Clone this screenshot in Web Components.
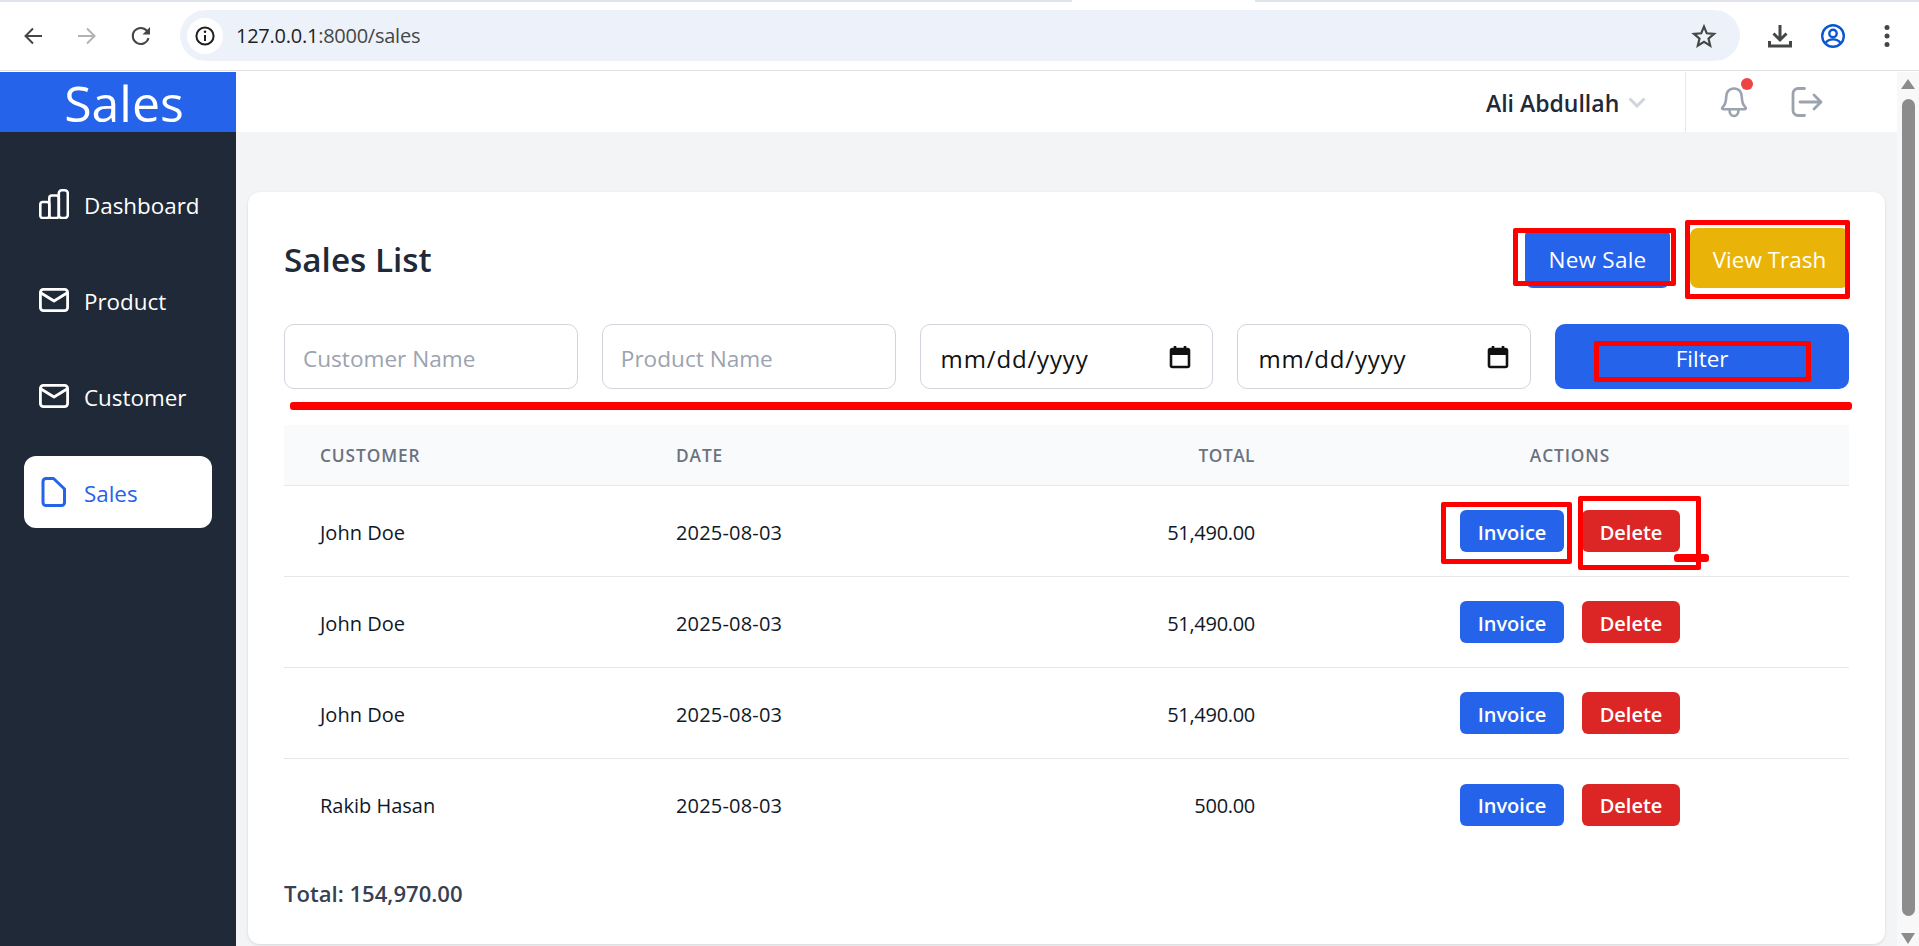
<!DOCTYPE html>
<html lang="en">
<head>
<meta charset="UTF-8">
<title>Sales</title>
<style>
    html, body { margin: 0; height: 946px; overflow: hidden; background: #f3f4f6; }
    body { font-family: "Open Sans", "Noto Sans", sans-serif; position: relative; }
    .shell { display: flex; height: 874px; }
    .main { flex: 1; min-width: 0; display: flex; flex-direction: column; }
    .content { flex: 1; padding: 60px 12px 0; min-height: 0; }
</style>
</head>
<body>
<script>
    function define(name, html) {
        customElements.define(name, class extends HTMLElement {
            connectedCallback() {
                if (this.shadowRoot) return;
                this.attachShadow({mode: 'open'});
                this.shadowRoot.innerHTML = typeof html === 'function' ? html(this) : html;
            }
        });
    }

    define('browser-bar', `
        <style>
            :host { display: block; height: 72px; background: #fff; box-sizing: border-box; font-family: "Open Sans", sans-serif; position: relative; }
            .strip { display: flex; height: 1.5px; background: #dfe4ec; }
            .tab { margin-left: 1072px; width: 183px; background: #fff; }
            .bar { height: 69.5px; box-sizing: border-box; background: #fff; border-radius: 10px 10px 0 0; border-bottom: 1px solid #dfe1e5; display: flex; align-items: center; position: relative; }
            svg { display: block; flex: none; }
            .nav { display: flex; align-items: center; margin-left: 21px; gap: 30px; }
            .omni { position: absolute; left: 180px; width: 1560px; top: 8.5px; height: 51px; border-radius: 26px; background: #edf2fa; display: flex; align-items: center; padding-left: 7px; box-sizing: border-box; }
            .info { width: 36px; height: 36px; border-radius: 50%; background: #fff; display: flex; align-items: center; justify-content: center; }
            .url { margin-left: 13px; font-size: 20px; color: #1f1f1f; letter-spacing: -.25px; }
            .url span { color: #444746; }
            .star { margin-left: auto; margin-right: 23px; }
            .tools { position: absolute; left: 1766px; top: 0; bottom: 0; display: flex; align-items: center; gap: 26px; }
        </style>
        <div class="strip"><div class="tab"></div></div>
        <div class="bar">
            <div class="nav">
                <svg width="24" height="24" viewBox="0 0 24 24" fill="none" stroke="#444746" stroke-width="2"><path d="M21 12H5M12 4.5 4.5 12l7.5 7.5"/></svg>
                <svg width="24" height="24" viewBox="0 0 24 24" fill="none" stroke="#b1b3b3" stroke-width="2"><path d="M3 12h16M12 4.5l7.5 7.5-7.5 7.5"/></svg>
                <svg width="24" height="24" viewBox="0 0 24 24" fill="none" stroke="#444746" stroke-width="2"><path d="M19.5 14a8 8 0 1 1-1.6-7.2L20 9"/><path fill="#444746" stroke="none" d="M21 3v7.5h-7.5z"/></svg>
            </div>
            <div class="omni">
                <div class="info"><svg width="22" height="22" viewBox="0 0 22 22" fill="none" stroke="#1f1f1f" stroke-width="2"><circle cx="11" cy="11" r="8.6"/><path d="M11 10v6"/><circle cx="11" cy="6.8" r=".6" stroke-width="1.4"/></svg></div>
                <div class="url">127.0.0.1<span>:8000/sales</span></div>
                <svg class="star" width="26" height="26" viewBox="0 0 26 26" fill="none" stroke="#444746" stroke-width="2.2"><path d="M13 3.6l2.8 6.7 7.2.6-5.5 4.7 1.7 7-6.2-3.7-6.2 3.7 1.7-7L3 10.9l7.2-.6z"/></svg>
            </div>
            <div class="tools">
                <svg width="28" height="28" viewBox="0 0 28 28" fill="none" stroke="#444746" stroke-width="3"><path d="M14 3v15M7.5 11.5 14 18l6.5-6.5M3.5 19v5h21v-5"/></svg>
                <svg width="26" height="26" viewBox="0 0 26 26" fill="none" stroke="#0b57d0" stroke-width="2.4"><circle cx="13" cy="13" r="10.8"/><circle cx="13" cy="10.5" r="3.7"/><path d="M5.5 20c2-2.8 4.8-3.6 7.5-3.6s5.5.8 7.5 3.6"/></svg>
                <svg width="6" height="26" viewBox="0 0 6 26" fill="#444746" style="margin-left:12px"><circle cx="3" cy="4.5" r="2.5"/><circle cx="3" cy="13" r="2.5"/><circle cx="3" cy="21.5" r="2.5"/></svg>
            </div>
        </div>`);

    define('side-nav', `
        <style>
            :host { display: flex; flex-direction: column; width: 236px; flex: none; background: #1f2937; }
            .logo { height: 60px; box-sizing: border-box; padding: 2px 0 0 12px; background: #2563eb; color: #fff; font-size: 50px; line-height: 58px; text-align: center; }
            nav { display: flex; flex-direction: column; gap: 24px; padding: 36px 24px; }
        </style>
        <div class="logo">Sales</div>
        <nav><slot></slot></nav>`);

    define('nav-item', `
        <style>
            :host { display: flex; align-items: center; height: 72px; border-radius: 12px; padding-left: 15px; color: #fff; font-size: 22.4px; gap: 15px; }
            :host([active]) { background: #fff; color: #2563eb; }
            ::slotted(svg) { flex: none; display: block; }
            .t { padding-top: 2px; }
        </style>
        <slot name="icon"></slot><span class="t"><slot></slot></span>`);

    define('top-bar', `
        <style>
            :host { display: flex; align-items: center; height: 60px; background: #fff; flex: none; position: relative; }
            .user { position: absolute; left: 1250px; top: 0; bottom: 0; display: flex; align-items: center; gap: 9px; font-size: 23px; font-weight: 600; color: #1f2937; }
            .user span { padding-top: 1px; }
            .right { position: absolute; left: 1449px; top: 0; bottom: 0; border-left: 1px solid #e5e7eb; width: 212px; }
            svg { display: block; position: absolute; }
            .dot { position: absolute; left: 55px; top: 6px; width: 12px; height: 12px; border-radius: 50%; background: #ef4444; }
        </style>
        <div class="user"><span>Ali Abdullah</span>
            <svg style="position:static" width="18" height="11" viewBox="0 0 18 11" fill="none" stroke="#d1d5db" stroke-width="3"><path d="M1.5 1.5 9 9l7.5-7.5"/></svg>
        </div>
        <div class="right">
            <svg style="left:34px;top:14px" width="28" height="32" viewBox="0 0 28 32" fill="none" stroke="#9ca3af" stroke-width="2.6" stroke-linecap="round" stroke-linejoin="round"><path d="M14 2.5c-5 0-7.8 3.7-7.8 8.5 0 5.5-1.2 8-3.9 10.7-.5.7 0 1.5.8 1.5h21.800c.8 0 1.300-.8.8-1.500-2.700-2.700-3.900-5.200-3.900-10.700 0-4.800-2.800-8.500-7.800-8.500z"/><path d="M9.5 24c0 3.8 2 6 4.500 6s4.500-2.200 4.500-6"/></svg>
            <div class="dot"></div>
            <svg style="left:105px;top:15px" width="32" height="30" viewBox="0 0 32 30" fill="none" stroke="#9ca3af" stroke-width="2.8" stroke-linecap="round" stroke-linejoin="round"><path d="M13.5 1.5H7a5 5 0 0 0-5 5v17a5 5 0 0 0 5 5h6.5"/><path d="M9 15h21M23 8l7 7-7 7"/></svg>
        </div>`);

    define('app-btn', `
        <style>
            :host { display: flex; align-items: center; justify-content: center; box-sizing: border-box; height: 42px; padding-top: 2px; border-radius: 6px; color: #fff; font-size: 20px; font-weight: 600; }
            :host([kind="blue"]) { background: #2563eb; }
            :host([kind="red"]) { background: #dc2626; }
            :host([kind="yellow"]) { background: #eab308; }
            :host([big]) { height: 60px; padding-top: 3px; border-radius: 8px; font-size: 22.5px; font-weight: 400; }
            :host([wide]) { height: 65px; padding-top: 3px; border-radius: 10px; font-size: 22.5px; font-weight: 400; }
        </style>
        <slot></slot>`);

    define('field-box', host => `
        <style>
            :host { display: flex; align-items: center; box-sizing: border-box; height: 65px; border: 1px solid #d1d5db; border-radius: 10px; padding: 0 18px; font-size: 22.6px; color: #9ca3af; background: #fff; }
            :host([date]) { color: #111; padding: 0 21px 0 20px; justify-content: space-between; font-size: 24px; letter-spacing: .85px; }
            .t { padding-top: 3px; }
            svg { display: block; }
        </style>
        <span class="t"><slot></slot></span>
        ${host.hasAttribute('date') ? `<svg width="22" height="24" viewBox="0 0 22 24" fill="none" stroke="#111" stroke-width="2.6"><rect x="2" y="4" width="18" height="18" rx="1.5"/><path d="M2 7.5h18" stroke-width="5"/><path d="M6 1v3M16 1v3"/></svg>` : ''}`);

    define('table-head', `
        <style>
            :host { display: grid; grid-template-columns: 356px 295px 356px 558px; height: 61px; box-sizing: border-box; background: #f9fafb; border-bottom: 1px solid #e5e7eb; align-items: center; font-size: 17.3px; font-weight: 600; letter-spacing: .9px; color: #6b7280; }
            div { padding-left: 36px; }
            .total { text-align: right; padding: 0 36px 0 0; letter-spacing: .5px; }
            .act { text-align: center; padding: 0; }
        </style>
        <div>CUSTOMER</div><div>DATE</div><div class="total">TOTAL</div><div class="act">ACTIONS</div>`);

    define('sales-row', host => `
        <style>
            :host { display: grid; grid-template-columns: 356px 295px 356px 558px; height: 91px; box-sizing: border-box; border-bottom: 1px solid #e5e7eb; align-items: center; font-size: 20px; color: #111827; }
            :host(:last-of-type) { border-bottom: 0; }
            div.c { padding: 2px 0 0 36px; }
            .date { letter-spacing: .18px; }
            .total { text-align: right; padding: 2px 36px 0 0; letter-spacing: -.3px; }
            .act { display: flex; justify-content: center; gap: 18px; }
            .act app-btn:first-child { width: 104px; }
            .act app-btn:last-child { width: 98px; }
        </style>
        <div class="c">${host.getAttribute('customer')}</div>
        <div class="c date">${host.getAttribute('date')}</div>
        <div class="total">${host.getAttribute('total')}</div>
        <div class="act"><app-btn kind="blue">Invoice</app-btn><app-btn kind="red">Delete</app-btn></div>`);

    define('sales-card', `
        <style>
            :host { display: block; box-sizing: border-box; height: 752px; background: #fff; border-radius: 12px; padding: 36px 36px 0; box-shadow: 0 1px 3px rgba(0,0,0,.12); }
            .head { display: flex; align-items: center; height: 60px; gap: 20px; }
            h2 { margin: 0 auto 0 0; padding-top: 1px; font-size: 33.3px; font-weight: 600; color: #1f2937; }
            .head app-btn:nth-of-type(1) { width: 145px; letter-spacing: .25px; }
            .head app-btn:nth-of-type(2) { width: 159px; }
            .filters { display: grid; grid-template-columns: repeat(5, 1fr); gap: 24px; margin: 36px 0; }
            .total { margin-top: 23px; height: 40px; line-height: 40px; font-size: 22.1px; font-weight: 600; color: #374151; }
        </style>
        <div class="head"><h2>Sales List</h2><app-btn kind="blue" big>New Sale</app-btn><app-btn kind="yellow" big>View Trash</app-btn></div>
        <div class="filters">
            <field-box>Customer Name</field-box>
            <field-box>Product Name</field-box>
            <field-box date>mm/dd/yyyy</field-box>
            <field-box date>mm/dd/yyyy</field-box>
            <app-btn kind="blue" wide>Filter</app-btn>
        </div>
        <slot></slot>
        <div class="total">Total: 154,970.00</div>`);

    define('scroll-rail', `
        <style>
            :host { display: flex; flex-direction: column; align-items: center; width: 22px; flex: none; background: #f8f8f8; box-sizing: border-box; height: 874px; }
            .up { width: 0; height: 0; border: 7.5px solid transparent; border-top: 0; border-bottom: 10px solid #8c8c8c; margin-top: 7px; }
            .thumb { width: 13px; height: 817px; background: #8c8c8c; border-radius: 7px; margin-top: 10px; }
            .down { width: 0; height: 0; border: 7.5px solid transparent; border-bottom: 0; border-top: 11px solid #8c8c8c; margin-top: 17px; }
        </style>
        <div class="up"></div><div class="thumb"></div><div class="down"></div>`);

    // red marker scribbles someone drew on top of the screenshot
    define('ink-marks', `
        <style>
            :host { display: block; position: absolute; inset: 0; pointer-events: none; }
            i { position: absolute; box-sizing: border-box; border: 5px solid #f00; border-radius: 2px; }
            b { position: absolute; background: #f00; border-radius: 3px; }
        </style>
        <i style="left:1513px;top:228px;width:163px;height:58px"></i>
        <i style="left:1685px;top:220px;width:165px;height:79px"></i>
        <i style="left:1594px;top:341px;width:217px;height:41px"></i>
        <b style="left:290px;top:402px;width:1562px;height:8px"></b>
        <i style="left:1441px;top:502px;width:131px;height:62px"></i>
        <i style="left:1578px;top:496px;width:123px;height:74px"></i>
        <b style="left:1674px;top:554px;width:35px;height:8px"></b>`);
</script>

<browser-bar></browser-bar>
<div class="shell">
    <side-nav>
        <nav-item>
            <svg slot="icon" width="30" height="30" viewBox="0 0 30 30" fill="none" stroke="#fff" stroke-width="2.6"><rect x="1.3" y="13" width="9" height="16" rx="2.5"/><rect x="10.3" y="6.5" width="9.5" height="22.5" rx="2.5"/><rect x="19.8" y="1.3" width="9" height="27.7" rx="3"/></svg>
            Dashboard
        </nav-item>
        <nav-item>
            <svg slot="icon" width="30" height="30" viewBox="0 0 30 30" fill="none" stroke="#fff" stroke-width="2.8" stroke-linejoin="round"><rect x="1.4" y="4.4" width="27.2" height="21.2" rx="3"/><path d="M2 8l13 8 13-8"/></svg>
            Product
        </nav-item>
        <nav-item>
            <svg slot="icon" width="30" height="30" viewBox="0 0 30 30" fill="none" stroke="#fff" stroke-width="2.8" stroke-linejoin="round"><rect x="1.4" y="4.4" width="27.2" height="21.2" rx="3"/><path d="M2 8l13 8 13-8"/></svg>
            Customer
        </nav-item>
        <nav-item active>
            <svg slot="icon" width="30" height="30" viewBox="0 0 30 30" fill="none" stroke="#2563eb" stroke-width="3" stroke-linejoin="round"><path d="M7 1.5h7.5L25.5 12v13.5a3 3 0 0 1-3 3H7a3 3 0 0 1-3-3v-21a3 3 0 0 1 3-3z"/></svg>
            Sales
        </nav-item>
    </side-nav>
    <div class="main">
        <top-bar></top-bar>
        <div class="content">
            <sales-card>
                <table-head></table-head>
                <sales-row customer="John Doe" date="2025-08-03" total="51,490.00"></sales-row>
                <sales-row customer="John Doe" date="2025-08-03" total="51,490.00"></sales-row>
                <sales-row customer="John Doe" date="2025-08-03" total="51,490.00"></sales-row>
                <sales-row customer="Rakib Hasan" date="2025-08-03" total="500.00"></sales-row>
            </sales-card>
        </div>
    </div>
    <scroll-rail></scroll-rail>
</div>
<ink-marks></ink-marks>
</body>
</html>
